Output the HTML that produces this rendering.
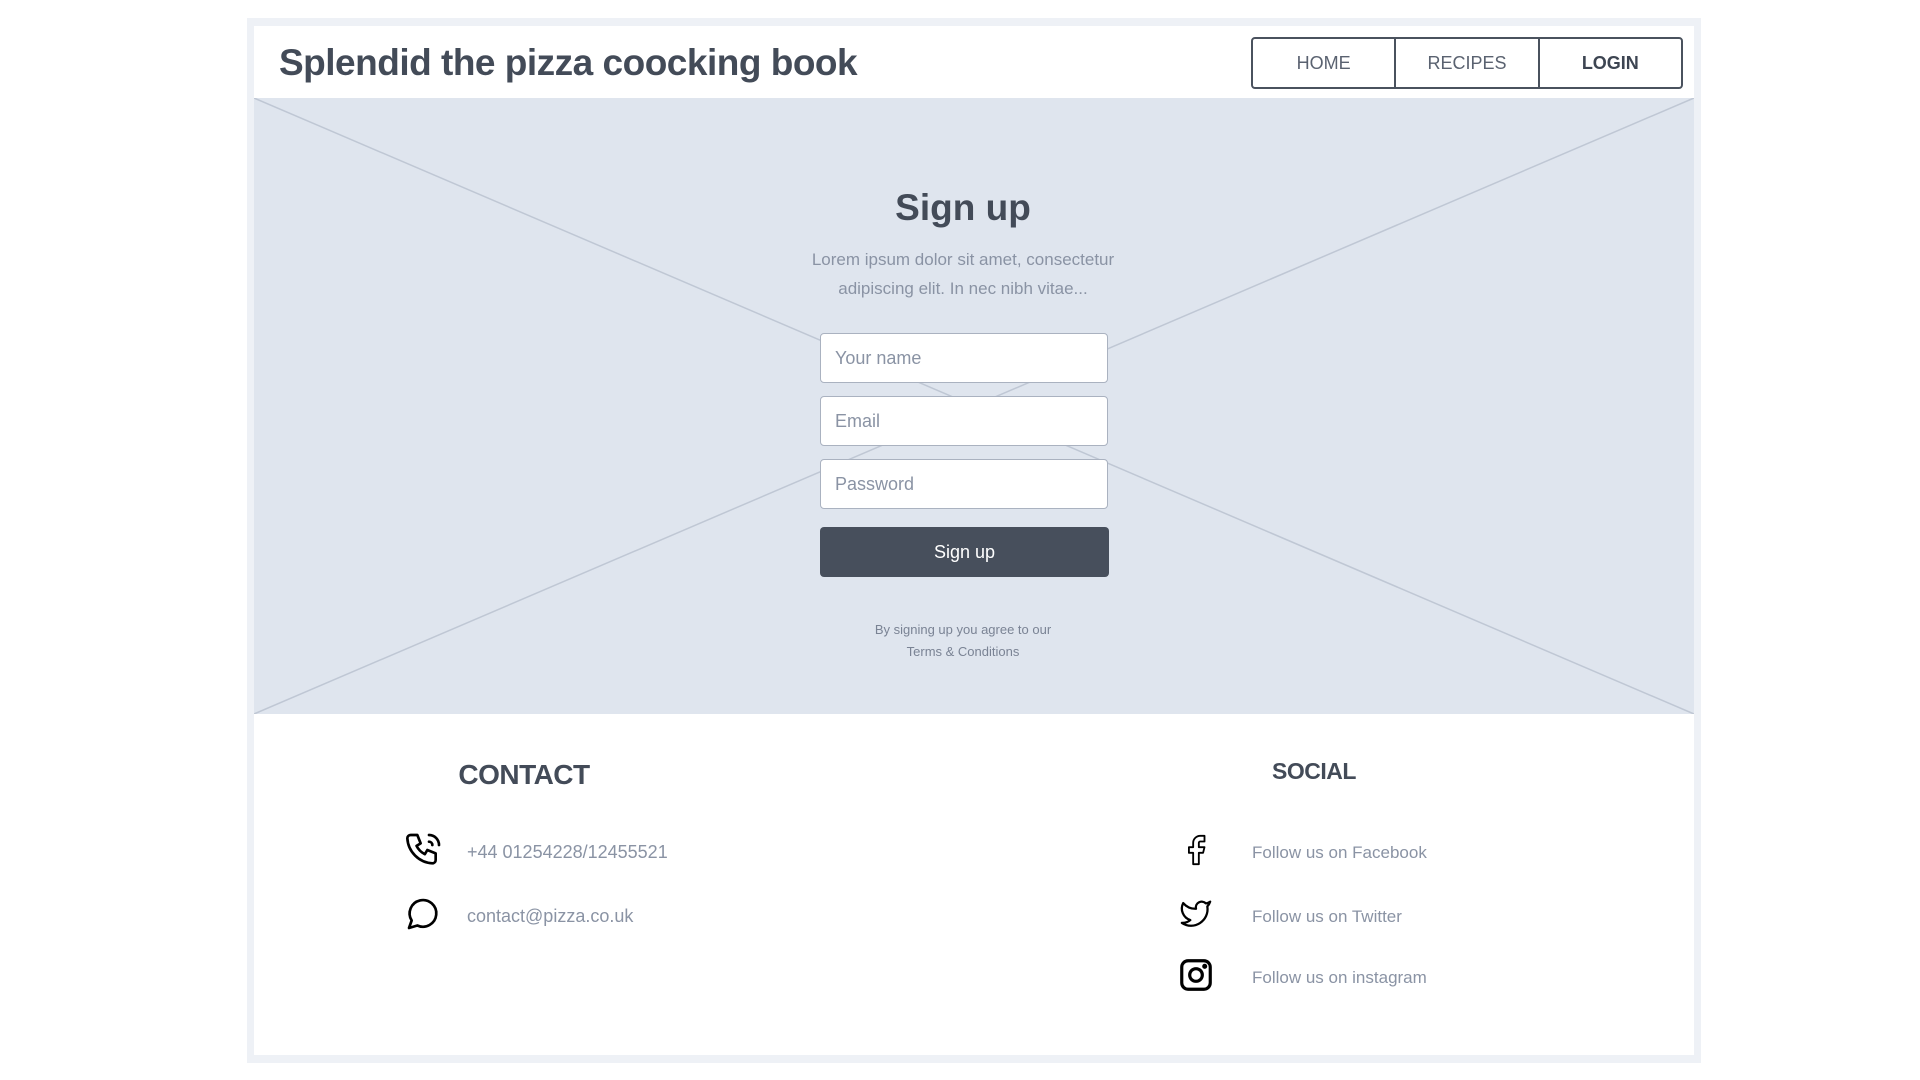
<!DOCTYPE html>
<html><head><meta charset="utf-8"><style>
*{margin:0;padding:0;box-sizing:border-box}
body{width:1920px;height:1080px;background:#fff;font-family:"Liberation Sans",sans-serif;position:relative;overflow:hidden}
.frame{position:absolute;left:247px;top:18px;width:1454px;height:1045px;background:#eef1f6}
.inner{position:absolute;left:254px;top:26px;width:1440px;height:1029px;background:#fff}
.abs{position:absolute}
.title{left:279px;top:42px;font-size:37px;font-weight:bold;color:#434b58;letter-spacing:-0.5px}
.nav{left:1251px;top:37px;width:432px;height:52px;border:2px solid #4a525e;border-radius:4px;display:flex}
.nav div{flex:1;display:flex;align-items:center;justify-content:center;font-size:18px;color:#5a6270;border-left:2px solid #4a525e}
.nav div:first-child{border-left:none}
.hero{left:254px;top:98px;width:1440px;height:616px;background:#dfe5ee}
.c{text-align:center;width:600px;left:663px}
.inp{left:820px;width:288px;height:50px;background:#fff;border:1.5px solid #aab2c0;border-radius:4px;font-size:18px;color:#8a93a4;padding:14px 14px}
.lbl{color:#8a93a4;font-size:17px}
.ic{position:absolute}
</style></head><body>
<div class="frame"></div>
<div class="inner"></div>
<div class="abs title">Splendid the pizza coocking book</div>
<div class="abs nav"><div>HOME</div><div>RECIPES</div><div style="font-weight:bold;color:#3d4552">LOGIN</div></div>
<div class="abs hero"><svg width="1440" height="616" style="position:absolute;left:0;top:0"><line x1="0" y1="0" x2="1440" y2="616" stroke="#bfc7d4" stroke-width="1.5"/><line x1="1440" y1="0" x2="0" y2="616" stroke="#bfc7d4" stroke-width="1.5"/></svg></div>
<div class="abs c" style="top:187px;font-size:37px;font-weight:bold;color:#434b58">Sign up</div>
<div class="abs c" style="top:245px;font-size:17px;line-height:29px;color:#8a93a4">Lorem ipsum dolor sit amet, consectetur<br>adipiscing elit. In nec nibh vitae...</div>
<div class="abs inp" style="top:333px">Your name</div>
<div class="abs inp" style="top:396px">Email</div>
<div class="abs inp" style="top:459px">Password</div>
<div class="abs" style="left:820px;top:527px;width:289px;height:50px;background:#474f5c;border-radius:4px;color:#fff;font-size:18px;text-align:center;line-height:50px">Sign up</div>
<div class="abs c" style="top:619px;font-size:13px;line-height:22px;color:#7a8394">By signing up you agree to our<br>Terms &amp; Conditions</div>
<div class="abs" style="left:424px;width:200px;text-align:center;top:759px;font-size:28px;font-weight:bold;color:#434b58;letter-spacing:-0.5px">CONTACT</div>
<div class="abs" style="left:1214px;width:200px;text-align:center;top:758px;font-size:23px;font-weight:bold;color:#434b58;letter-spacing:-0.5px">SOCIAL</div>
<svg class="ic" style="left:404px;top:830px" width="40" height="40" viewBox="0 0 24 24" fill="none" stroke="#000" stroke-width="1.6" stroke-linecap="round" stroke-linejoin="round"><path d="M4 3h4l2 5-2.5 1.5a11 11 0 0 0 5 5L14 12l5 2v4a2 2 0 0 1-2 2A16 16 0 0 1 2 5a2 2 0 0 1 2-2"/><path d="M15 7a2 2 0 0 1 2 2M15 3a6 6 0 0 1 6 6"/></svg>
<div class="abs lbl" style="left:467px;top:842px;font-size:18px">+44 01254228/12455521</div>
<svg class="ic" style="left:404px;top:893px" width="40" height="40" viewBox="0 0 24 24" fill="none" stroke="#000" stroke-width="1.6" stroke-linejoin="round"><path d="M3 21l1.6-4.5A8 8 0 1 1 8 19.5L3 21z"/></svg>
<div class="abs lbl" style="left:467px;top:906px;font-size:18px">contact@pizza.co.uk</div>
<svg class="ic" style="left:1179px;top:833px" width="34" height="34" viewBox="0 0 24 24" fill="none" stroke="#000" stroke-width="1.3" stroke-linejoin="round"><path d="M18 2h-3a5 5 0 0 0-5 5v3H7v4h3v8h4v-8h3l1-4h-4V7a1 1 0 0 1 1-1h3z"/></svg>
<div class="abs lbl" style="left:1252px;top:843px">Follow us on Facebook</div>
<svg class="ic" style="left:1178px;top:896px" width="36" height="34" viewBox="0 0 24 24" fill="none" stroke="#000" stroke-width="1.6" stroke-linejoin="round"><path d="M22 4s-.7 2.1-2 3.4c1.6 10-9.4 17.3-18 11.6 2.2.1 4.4-.6 6-2C3 15.5.5 9.6 3 5c2.2 2.6 5.6 4.1 9 4-.9-4.2 4-6.6 7-3.8 1.1 0 3-1.2 3-1.2z"/></svg>
<div class="abs lbl" style="left:1252px;top:907px">Follow us on Twitter</div>
<svg class="ic" style="left:1177px;top:956px" width="38" height="38" viewBox="0 0 24 24" fill="none" stroke="#000" stroke-width="2"><rect x="3" y="3" width="18" height="18" rx="4"/><circle cx="12" cy="12" r="4"/><circle cx="17.5" cy="6.5" r="0.6" fill="#000"/></svg>
<div class="abs lbl" style="left:1252px;top:968px">Follow us on instagram</div>
</body></html>
